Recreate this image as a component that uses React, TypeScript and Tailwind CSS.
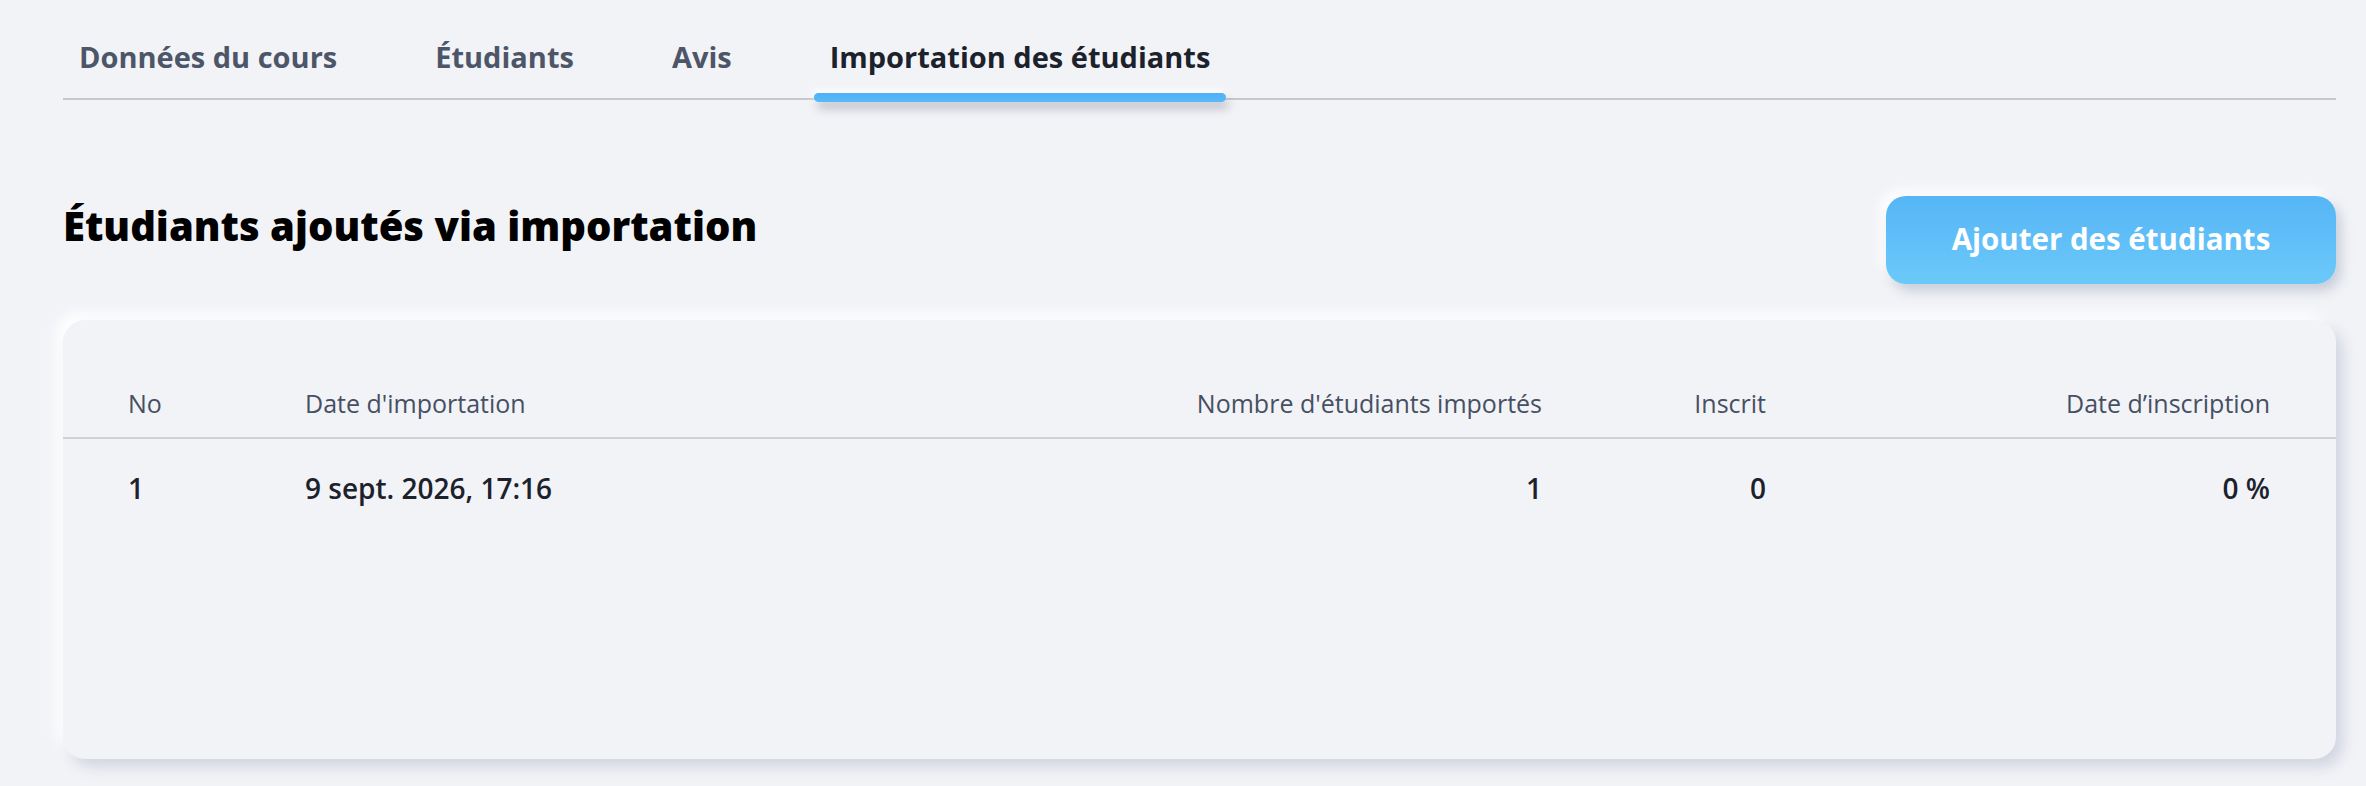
const tabs = ["Données du cours", "Étudiants", "Avis", "Importation des étudiants"];

type ImportRow = {
    no: number;
    date: string;
    imported: number;
    enrolled: number;
    rate: string;
};

const rows: ImportRow[] = [
    { no: 1, date: "9 sept. 2026, 17:16", imported: 1, enrolled: 0, rate: "0 %" },
];

const cols = "grid grid-cols-[177px_1fr_480px_224px_504px] pl-[65px] pr-[66px]";

export default function App() {
    const active = 3;

    return (
        <div className="min-h-screen w-full bg-[#f2f3f7] pl-[63px] pr-[30px] pt-[40px] font-['Open_Sans','Lato',sans-serif]">
            {/* tabs */}
            <div className="relative flex gap-[66px] border-b-2 border-[#c6c8ce]">
                {tabs.map((tab, i) => (
                    <div key={tab} className="relative px-4 pb-[24px]">
                        <span
                            className={
                                "text-[29px] leading-[34px] font-bold " +
                                (i === active ? "text-[#1c222c]" : "text-[#4d5668]")
                            }
                        >
                            {tab}
                        </span>
                        {i === active && (
                            <div className="absolute left-0 right-0 -bottom-[4px] h-[9px] rounded-full bg-gradient-to-b from-[#4fb0f5] to-[#5ab9f7] shadow-[3px_7px_10px_rgba(60,70,90,0.28),-2px_-3px_6px_rgba(255,255,255,0.9)]" />
                        )}
                    </div>
                ))}
            </div>

            {/* title + action */}
            <div className="mt-[96px] flex items-start justify-between">
                <h1 className="mt-[6px] text-[40px] leading-[48px] font-extrabold text-black">
                    Étudiants ajoutés via importation
                </h1>
                <button className="h-[88px] w-[450px] rounded-[20px] bg-gradient-to-b from-[#56b5f6] to-[#6bc9f9] pb-[2px] text-[29.5px] font-bold text-white shadow-[5px_7px_12px_rgba(150,160,180,0.45),-6px_-6px_12px_rgba(255,255,255,0.95)]">
                    Ajouter des étudiants
                </button>
            </div>

            {/* table card */}
            <div className="mt-[36px] h-[439px] rounded-[22px] bg-[#f2f3f7] shadow-[7px_8px_14px_rgba(160,170,190,0.4),-7px_-7px_14px_rgba(255,255,255,1)]">
                <div className={cols + " border-b-2 border-[#cfd1d6] pt-[65px] pb-[16px] text-[25px] leading-[36px] font-medium text-[#465062]"}>
                    <div>No</div>
                    <div>Date d'importation</div>
                    <div className="text-right">Nombre d'étudiants importés</div>
                    <div className="text-right">Inscrit</div>
                    <div className="text-right">Date d’inscription</div>
                </div>
                {rows.map(row => (
                    <div key={row.no} className={cols + " pt-[30px] text-[28px] leading-[38px] font-semibold text-[#1c222c]"}>
                        <div>{row.no}</div>
                        <div>{row.date}</div>
                        <div className="text-right">{row.imported}</div>
                        <div className="text-right">{row.enrolled}</div>
                        <div className="text-right">{row.rate}</div>
                    </div>
                ))}
            </div>
        </div>
    );
}
